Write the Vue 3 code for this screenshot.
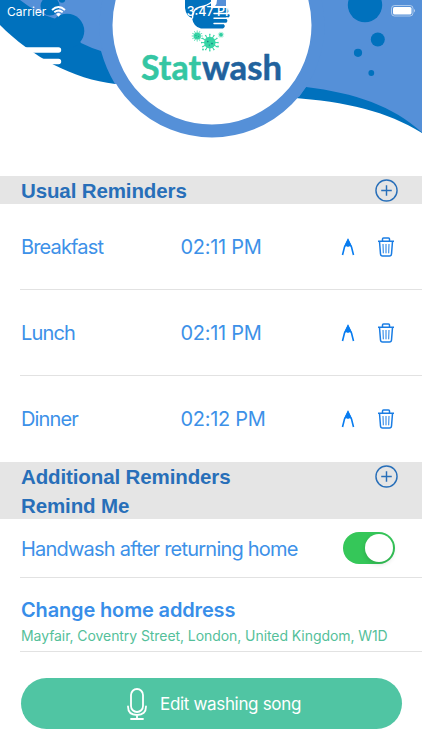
<script setup>
import {ref} from "vue";

const reminders = ref([
    {name: "Breakfast", time: "02:11 PM"},
    {name: "Lunch", time: "02:11 PM"},
    {name: "Dinner", time: "02:12 PM"}
]);

const remindHome = ref(true);
const spikes = [0, 30, 60, 90, 120, 150, 180, 210, 240, 270, 300, 330];
const germs = [
    {x: 197.2, y: 36, scale: 0.62},
    {x: 209.8, y: 42.6, scale: 1},
    {x: 221, y: 34.8, scale: 0.34}
];

const remove = (index) => {
    reminders.value.splice(index, 1);
};
</script>

<template>
    <div class="screen">
        <header class="hero">
            <svg class="artwork" viewBox="0 0 422 176">
                <path fill="#0071bd" d="M0 0H150V84H115C73 79 32 57 0 25Z"/>
                <path fill="#5590d8" d="M20 0H130V84H115Q106 69 101 51Q91 48 81 43L66 22L53 18Q38 14 20 0Z"/>
                <circle cx="67" cy="31" r="17.3" fill="#0071bd"/>
                <circle cx="50" cy="6" r="9.5" fill="#0071bd"/>
                <circle cx="62" cy="-.5" r="3.2" fill="#0071bd"/>
                <path fill="#0071bd" d="M290 60H422V133C386 111 348 102 290 97.500Z"/>
                <path fill="#5590d8" d="M280 0H422V132.500C393 106 355 93 306 87L299 97L280 85Z"/>
                <g fill="#0071bd">
                    <circle cx="365" cy="5" r="17.200"/>
                    <circle cx="377.800" cy="39.500" r="7"/>
                    <circle cx="358" cy="52.800" r="4.100"/>
                    <circle cx="371.300" cy="73" r="2.900"/>
                </g>
                <circle cx="212" cy="25" r="106" fill="#fff" stroke="#5590d8" stroke-width="13"/>
                <!-- hands -->
                <path fill="#0071bd" d="M185 0H211V8H228Q230 10 228 12.500V13.500H229Q231 15.500 228.500 17.500H226V19H226.500Q228.500 21 226 23H224V24.500Q226 26.500 223 28.500H201Q193.500 27 192 18Q186 16 185 8Z"/>
                <path fill="#5590d8" d="M217 0H226V6H215Q217 4 217 0Z"/>
                <path fill="none" stroke="#fff" stroke-width="1.400" stroke-linecap="round" d="M192.500 18Q192 9 200 7Q207 6 213 1M214 13.500H230M214 18.300H228M214 23.500H226"/>
                <g v-for="germ in germs" :key="germ.x" :transform="`translate(${germ.x} ${germ.y}) scale(${germ.scale})`">
                    <circle r="5.800" fill="#36d5a5"/>
                    <path v-for="angle in spikes" :key="angle" :transform="`rotate(${angle})`" d="M0-5V-8.300M-.7-8.300H.7" stroke="#36d5a5" stroke-width="1"/>
                    <circle cx="-2" cy="-1" r=".8" fill="#167f83"/>
                    <circle cx="2.200" cy="1" r=".8" fill="#167f83"/>
                    <circle cx="-.5" cy="2.500" r=".6" fill="#167f83"/>
                </g>
                <circle cx="203" cy="49.500" r=".9" fill="#36d5a5"/>
                <circle cx="218" cy="46.500" r=".9" fill="#36d5a5"/>
                <text class="wordmark stat" x="141" y="80.300" textLength="60" lengthAdjust="spacingAndGlyphs">Stat</text>
                <text class="wordmark wash" x="202" y="80.300" textLength="80" lengthAdjust="spacingAndGlyphs">wash</text>
                <path fill="none" stroke="#fff" stroke-width="5.400" stroke-linecap="round" d="M24 50H58.500M24 61.500H58.500"/>
            </svg>
            <div class="status">
                <div class="carrier">
                    <span>Carrier</span>
                    <svg class="wifi" viewBox="0 0 15 11">
                        <path d="M1 4Q7.500-2 14 4M3.300 6.300Q7.500 2.600 11.700 6.300" fill="none" stroke="#fff" stroke-width="1.900"/>
                        <path d="M5 8Q7.500 5.800 10 8L7.500 10.700Z" fill="#fff"/>
                    </svg>
                </div>
                <span class="clock">3:47 PM</span>
                <svg class="battery" viewBox="0 0 25 12">
                    <rect x=".5" y=".5" width="21.500" height="10.500" rx="3" fill="none" stroke="#fff" stroke-opacity=".5"/>
                    <rect x="2" y="2" width="18.500" height="7.500" rx="1.500" fill="#fff"/>
                    <path d="M23 4Q25 5.700 23 7.500Z" fill="#fff" fill-opacity=".6"/>
                </svg>
            </div>
        </header>

        <section>
            <div class="bar">
                <h2>Usual Reminders</h2>
                <svg class="plus" viewBox="0 0 24 24">
                    <path d="M12 1A11 11 0 1 1 12 23A11 11 0 1 1 12 1M12 6.500V17.500M6.500 12H17.500"/>
                </svg>
            </div>
            <div v-for="(item, index) in reminders" :key="item.name" class="reminder">
                <span class="name">{{ item.name }}</span>
                <span class="time">{{ item.time }}</span>
                <svg class="pencil" viewBox="0 0 14 18">
                    <path d="M1.500 17L3.500 9L7 2L10.500 9L12.500 17" fill="none" stroke="#087cf0" stroke-width="1.600"/>
                    <path d="M7 .5L11.200 9.200Q9 7.500 7 9Q5 7.500 2.800 9.200Z" fill="#087cf0"/>
                </svg>
                <svg class="trash" viewBox="0 0 18 20" @click="remove(index)">
                    <path d="M1 4.200H17M5.500 4V2Q5.500 1 6.500 1H11.500Q12.500 1 12.500 2V4M2.500 4.500L3.500 17Q3.700 19 5.500 19H12.500Q14.300 19 14.500 17L15.500 4.500"/>
                    <path class="slats" d="M6 7L6.300 16.300M9 7V16.300M12 7L11.700 16.300"/>
                </svg>
            </div>
        </section>

        <section>
            <div class="bar tall">
                <div>
                    <h2>Additional Reminders</h2>
                    <h2>Remind Me</h2>
                </div>
                <svg class="plus" viewBox="0 0 24 24">
                    <path d="M12 1A11 11 0 1 1 12 23A11 11 0 1 1 12 1M12 6.500V17.500M6.500 12H17.500"/>
                </svg>
            </div>
            <div class="option">
                <span class="option-name">Handwash after returning home</span>
                <button class="switch" :class="{on: remindHome}" @click="remindHome = !remindHome"/>
            </div>
            <div class="address">
                <h3>Change home address</h3>
                <p>Mayfair, Coventry Street, London, United Kingdom, W1D</p>
            </div>
        </section>

        <button class="song">
            <svg class="mic" viewBox="0 0 20 32">
                <rect x="4" y="1" width="12" height="23" rx="6"/>
                <path d="M1 18.500Q1 27 10 27Q19 27 19 18.500M10 27V31M4 31H16"/>
            </svg>
            <span>Edit washing song</span>
        </button>
    </div>
</template>

<style>
body {
    background: #ffffff;
}
</style>

<style scoped>
.screen {
    width: 422px;
    height: 750px;
    overflow: hidden;
    background: #ffffff;
    font-family: Inter, "Liberation Sans", sans-serif;
    color: #3d91e8;
}

.hero {
    position: relative;
    height: 176px;
}

.artwork {
    display: block;
    width: 422px;
    height: 176px;
}

.wordmark {
    font-family: Lato, sans-serif;
    font-size: 34px;
    font-weight: 700;
    stroke-width: 0.5;
    stroke-linejoin: round;
}

.stat {
    fill: #34c6a3;
    stroke: #34c6a3;
}

.wash {
    fill: #21629d;
    stroke: #21629d;
}

.status {
    position: absolute;
    top: 0;
    left: 0;
    width: 100%;
    height: 22px;
    padding: 0 6px 0 7px;
    box-sizing: border-box;
    display: grid;
    grid-template-columns: 1fr auto 1fr;
    align-items: center;
    color: #ffffff;
    font-size: 12px;
}

.carrier {
    display: flex;
    align-items: center;
    gap: 5px;
}

.wifi {
    width: 15px;
    height: 11px;
}

.clock {
    font-size: 12.5px;
    font-weight: 500;
}

.battery {
    width: 25px;
    height: 12px;
    justify-self: end;
}

.bar {
    display: flex;
    justify-content: space-between;
    height: 28px;
    padding: 0 24.5px 0 21px;
    background: #e5e5e5;
}

.bar.tall {
    height: 57px;
}

h2 {
    margin: 0;
    height: 28.5px;
    font: bold 20.5px/30px "Liberation Sans", Arial, sans-serif;
    letter-spacing: -0.12px;
    color: #286fb9;
}

.plus {
    width: 23px;
    height: 23px;
    margin-top: 3px;
    fill: none;
    stroke: #286fb9;
    stroke-width: 1.5;
}

.reminder {
    display: flex;
    align-items: center;
    height: 85px;
    margin-left: 20px;
    padding: 0 27px 0 1px;
    border-bottom: 1px solid #e2e2e2;
    font-size: 20px;

    &:last-child {
        border-color: transparent;
    }
}

.name {
    width: 159.5px;
    letter-spacing: -0.85px;
}

.time {
    flex: 1;
    letter-spacing: -0.3px;
}

.pencil {
    width: 14px;
    height: 18px;
    margin-right: 22px;
}

.trash {
    width: 18px;
    height: 20px;
    fill: none;
    stroke: #1a7de4;
    stroke-width: 1.5;
}

.slats {
    stroke-width: 1;
}

.option {
    display: flex;
    align-items: center;
    justify-content: space-between;
    height: 58px;
    margin-left: 20px;
    padding: 0 27px 0 1px;
    border-bottom: 1px solid #e2e2e2;
    font-size: 20px;
}

.option-name {
    padding-top: 1px;
    letter-spacing: -0.78px;
}

.switch {
    display: flex;
    align-items: center;
    width: 52px;
    height: 32px;
    padding: 0 2px;
    border: 0;
    border-radius: 16px;
    background: #e5e5e5;

    &::before {
        content: "";
        width: 28px;
        height: 28px;
        border-radius: 50%;
        background: #ffffff;
        box-shadow: 0 2px 5px rgba(0, 0, 0, 0.15);
    }

    &.on {
        justify-content: flex-end;
        background: #35c759;
    }
}

.address {
    height: 74px;
    margin-left: 20px;
    padding: 19px 0 0 1px;
    box-sizing: border-box;
    border-bottom: 1px solid #e2e2e2;

    > h3 {
        margin: 0;
        font-size: 20px;
        line-height: 26px;
        font-weight: 600;
        letter-spacing: -0.15px;
        color: #388ee9;
    }

    > p {
        margin: 4px 0 0;
        font-size: 14px;
        line-height: 18px;
        letter-spacing: -0.07px;
        color: #54bf9a;
        white-space: nowrap;
    }
}

.song {
    display: flex;
    align-items: center;
    justify-content: center;
    gap: 13px;
    width: 381px;
    height: 51px;
    margin: 26px 0 0 20.5px;
    padding: 0 0 0 6px;
    border: 0;
    border-radius: 26px;
    background: #50c5a3;
    color: #ffffff;
    font: 17px Inter, sans-serif;
    letter-spacing: -0.33px;
}

.mic {
    width: 20px;
    height: 32px;
    fill: none;
    stroke: #ffffff;
    stroke-width: 1.8;
    stroke-linecap: round;
}
</style>
